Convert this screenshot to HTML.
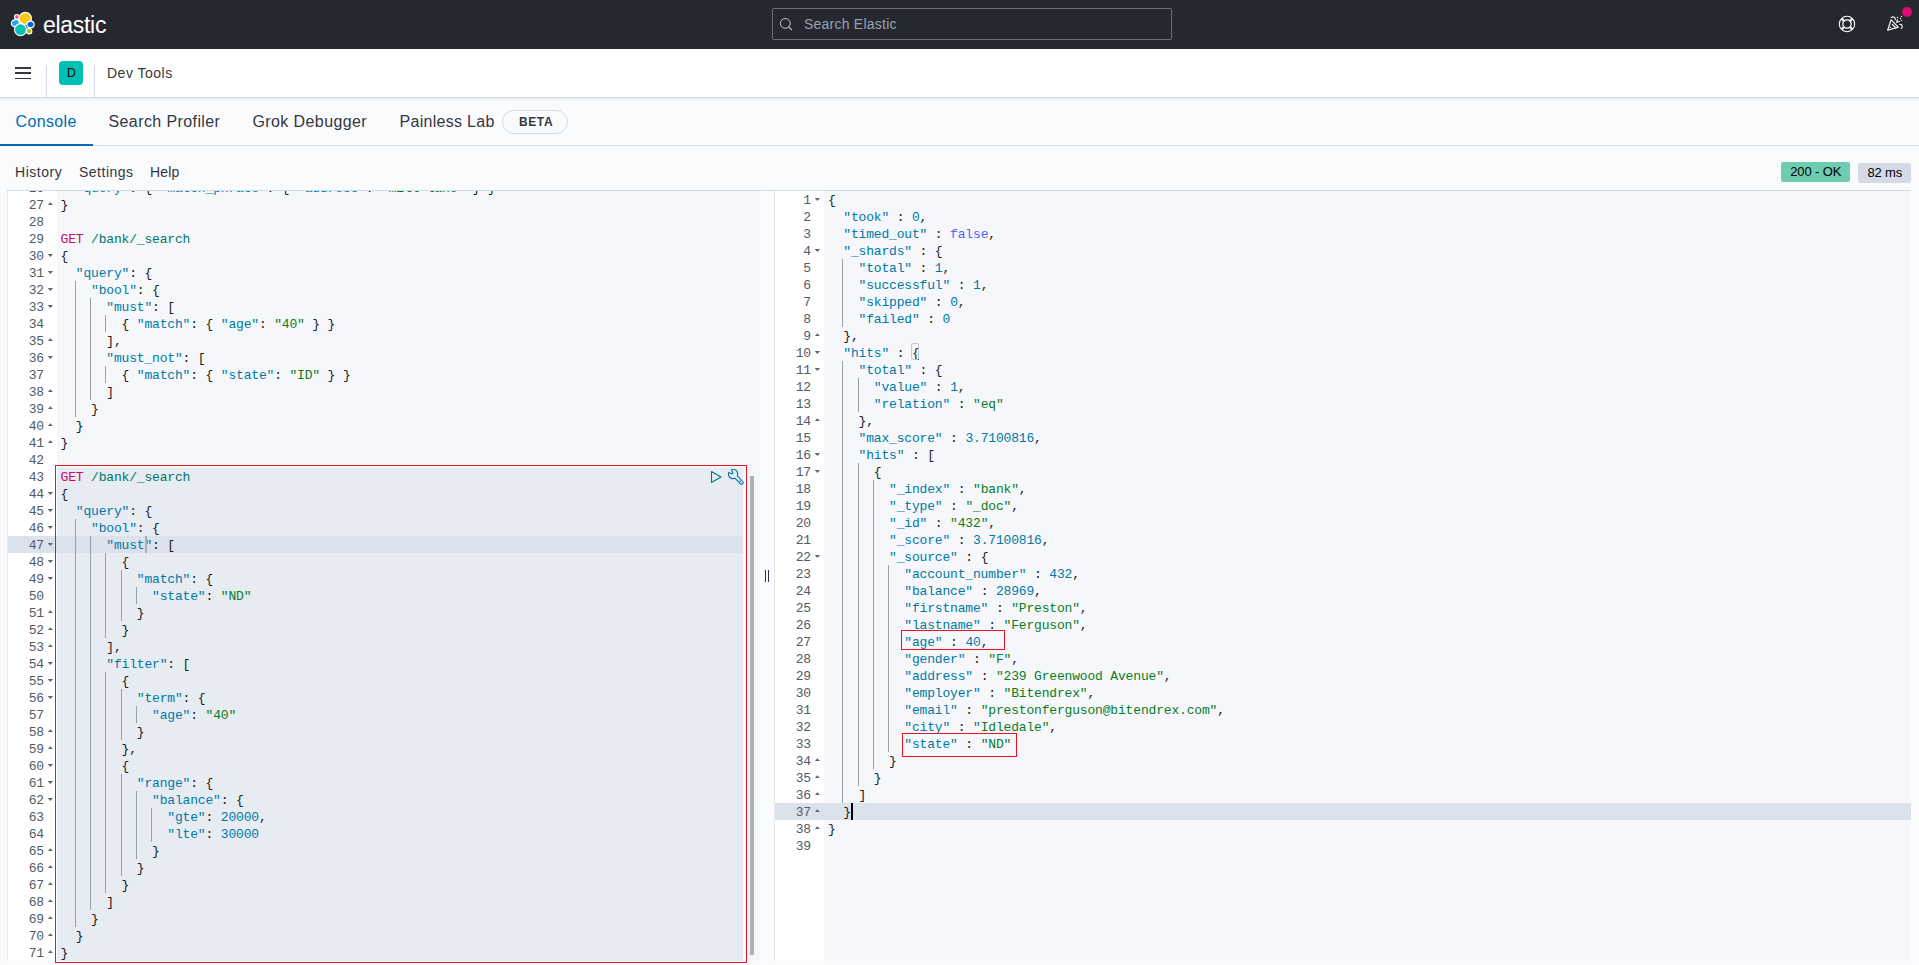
<!DOCTYPE html>
<html><head><meta charset="utf-8"><title>Dev Tools - Elastic</title>
<style>
*{box-sizing:border-box;margin:0;padding:0}
html,body{width:1919px;height:965px;overflow:hidden;background:#fafbfd;font-family:"Liberation Sans",sans-serif;color:#343741}
.a{position:absolute}
i{font-style:normal}
#hdr{position:absolute;left:0;top:0;width:1919px;height:49px;background:#25282f}
#bc{position:absolute;left:0;top:49px;width:1919px;height:49px;background:#fff;border-bottom:1px solid #d3dae6;box-shadow:0 1px 2px rgba(50,60,80,0.08),0 2px 3px rgba(50,60,80,0.03)}
.t{position:absolute;white-space:pre;line-height:1}
/* editors */
.ed{position:absolute;overflow:hidden}
.gn{position:absolute;height:17px;line-height:17px;text-align:right;font-family:"Liberation Mono",monospace;font-size:13px;letter-spacing:-0.171px;color:#535966;padding-top:1px}
.cl{position:absolute;height:17px;line-height:17px;white-space:pre;font-family:"Liberation Mono",monospace;font-size:13px;letter-spacing:-0.171px;color:#1a1c21;padding-top:1px}
.k{color:#0079a5}.s{color:#0b7c1f}.n{color:#0079a5}.c{color:#585cf6}
.ig{position:absolute;width:1px;height:17px;background:#98a1b0}
.fw{position:absolute;width:5.4px;height:3px;background:#5f6571}
.fo{clip-path:polygon(0 0,100% 0,50% 100%)}
.fc{clip-path:polygon(50% 0,100% 100%,0 100%)}
</style></head>
<body>
<div id="hdr">
  <svg class="a" style="left:10px;top:11px" width="26" height="26" viewBox="0 0 26 26">
    <g stroke="#fff" stroke-width="1.2">
      <circle cx="6.9" cy="5.9" r="2.4" fill="#f04e98"/>
      <ellipse cx="5.4" cy="12.1" rx="4.1" ry="3.4" transform="rotate(-20 5.4 12.1)" fill="#1ba9f5"/>
      <circle cx="15.3" cy="7.4" r="6.1" fill="#fec514"/>
      <ellipse cx="20.5" cy="13.4" rx="3.6" ry="3.3" fill="#0b64dd"/>
      <circle cx="10.5" cy="18.7" r="6" fill="#00bfb3"/>
      <circle cx="19.1" cy="20.2" r="2.7" fill="#93c90e"/>
    </g>
  </svg>
  <div class="t" style="left:43px;top:14px;font-size:23px;color:#fff;letter-spacing:-0.3px">elastic</div>
  <div class="a" style="left:772px;top:8px;width:400px;height:32px;border:1px solid #6a6f78;border-radius:2px"></div>
  <svg class="a" style="left:778px;top:17px" width="16" height="16" viewBox="0 0 16 16"><circle cx="7.3" cy="6.4" r="4.9" fill="none" stroke="#c8ccd2" stroke-width="1"/><path d="M10.7 9.9 L14 13.1" stroke="#c8ccd2" stroke-width="1.1"/></svg>
  <div class="t" style="left:804px;top:17px;font-size:14px;color:#98a2b3;letter-spacing:0.23px">Search Elastic</div>
  <svg class="a" style="left:1838px;top:15px" width="18" height="18" viewBox="0 0 18 18">
    <circle cx="9" cy="9" r="7.7" fill="none" stroke="#fff" stroke-width="1.1"/>
    <circle cx="9" cy="9" r="4.2" fill="none" stroke="#fff" stroke-width="1.2"/>
    <path d="M3.8 3.8 L5.7 5.7 M14.2 3.8 L12.3 5.7 M3.8 14.2 L5.7 12.3 M14.2 14.2 L12.3 12.3" stroke="#fff" stroke-width="2.3"/>
  </svg>
  <svg class="a" style="left:1882px;top:12px" width="26" height="24" viewBox="0 0 26 24" fill="none" stroke="#fff" stroke-width="1.1" stroke-linecap="round" stroke-linejoin="round">
    <path d="M5.6 18.2 L9.1 7.8 L16.3 15.1 Z"/>
    <path d="M10.4 12.5 L13.8 15.9"/>
    <path d="M9.2 5.7 C10.6 4.3 13.6 4.7 13.3 7.8"/>
    <path d="M15.4 7.6 L14.6 10.2 L17.5 9.5"/>
    <path d="M17.8 12.5 C19.6 11.7 21.4 13.7 19.4 16.5"/>
    <g fill="#fff" stroke="none"><circle cx="8.4" cy="15.5" r="0.65"/><circle cx="15.5" cy="5.4" r="0.65"/><circle cx="19.5" cy="4.4" r="0.65"/><circle cx="18.5" cy="6.5" r="0.65"/><circle cx="19.5" cy="8.4" r="0.65"/></g>
  </svg>
  <div class="a" style="left:1901.7px;top:6.7px;width:10.6px;height:10.6px;border-radius:50%;background:#dd0a73"></div>
</div>

<div id="bc">
  <div class="a" style="left:15px;top:18px;width:16px;height:1.5px;background:#343741"></div>
  <div class="a" style="left:15px;top:23px;width:16px;height:1.5px;background:#343741"></div>
  <div class="a" style="left:15px;top:28.5px;width:16px;height:1.5px;background:#343741"></div>
  <div class="a" style="left:46px;top:16px;width:1px;height:32px;background:#d3dae6"></div>
  <div class="a" style="left:59px;top:12px;width:24px;height:24px;border-radius:4px;background:#00bfb3"></div>
  <div class="t" style="left:65.3px;top:18px;font-size:12px;color:#000;width:12px;text-align:center">D</div>
  <div class="a" style="left:94px;top:16px;width:1px;height:32px;background:#d3dae6"></div>
  <div class="t" style="left:107px;top:16.6px;font-size:14px;color:#343741;letter-spacing:0.5px">Dev Tools</div>
</div>

<!-- tabs -->
<div class="a" style="left:0;top:145px;width:1919px;height:1px;background:#d3dae6"></div>
<div class="a" style="left:0;top:144px;width:93px;height:2px;background:#006bb4"></div>
<div class="t" style="left:15.5px;top:114px;font-size:16px;color:#006bb4;letter-spacing:0.35px">Console</div>
<div class="t" style="left:108.5px;top:114px;font-size:16px;color:#343741;letter-spacing:0.4px">Search Profiler</div>
<div class="t" style="left:252.5px;top:114px;font-size:16px;color:#343741;letter-spacing:0.4px">Grok Debugger</div>
<div class="t" style="left:399.5px;top:114px;font-size:16px;color:#343741;letter-spacing:0.3px">Painless Lab</div>
<div class="a" style="left:502px;top:110px;width:66px;height:24px;border:1px solid #d3dae6;border-radius:12px"></div>
<div class="t" style="left:519px;top:116px;font-size:12px;font-weight:bold;color:#343741;letter-spacing:0.6px">BETA</div>

<!-- console menu -->
<div class="t" style="left:15px;top:165px;font-size:14px;color:#343741;letter-spacing:0.54px">History</div>
<div class="t" style="left:79px;top:165px;font-size:14px;color:#343741;letter-spacing:0.5px">Settings</div>
<div class="t" style="left:150px;top:165px;font-size:14px;color:#343741;letter-spacing:0.2px">Help</div>
<div class="a" style="left:1781px;top:162px;width:69px;height:20px;border-radius:2px;background:#6dccb1"></div>
<div class="t" style="left:1790.2px;top:165px;font-size:13px;color:#000;letter-spacing:-0.12px">200 - OK</div>
<div class="a" style="left:1858px;top:163px;width:53px;height:20px;border-radius:2px;background:#d3dae6"></div>
<div class="t" style="left:1867.6px;top:166px;font-size:13px;color:#000;letter-spacing:-0.2px">82 ms</div>

<!-- editor frame -->
<div class="a" style="left:7px;top:190px;width:1904px;height:1px;background:#d3dae6"></div>
<div class="a" style="left:7px;top:191px;width:1px;height:770px;background:#e4e8ef"></div>

<!-- left editor -->
<div class="ed" style="left:8px;top:191px;width:752px;height:770px;background:#f5f7fa">
  <div class="a" style="left:0;top:0;width:49px;height:770px;background:#fff"></div>
  <!-- selection of current request -->
  <div class="a" style="left:49px;top:277px;width:686px;height:493px;background:#e7ebf2"></div>
  <!-- active line -->
  <div class="a" style="left:0;top:345px;width:735px;height:17px;background:#dce2eb"></div>
  <div style="position:absolute;left:-8px;top:-191px;width:1919px;height:965px"><div class="gn" style="top:179px;left:8px;width:36px">26</div><div class="cl" style="top:179px;left:60.5px">  <i class="k">&quot;query&quot;</i>: { <i class="k">&quot;match_phrase&quot;</i>: { <i class="k">&quot;address&quot;</i>: <i class="s">&quot;mill lane&quot;</i> } }</div><div class="gn" style="top:196px;left:8px;width:36px">27</div><div class="fw fc" style="top:202.3px;left:47.7px"></div><div class="cl" style="top:196px;left:60.5px">}</div><div class="gn" style="top:213px;left:8px;width:36px">28</div><div class="gn" style="top:230px;left:8px;width:36px">29</div><div class="cl" style="top:230px;left:60.5px"><i style="color:#c80a68">GET</i> <i style="color:#00756c">/bank/_search</i></div><div class="gn" style="top:247px;left:8px;width:36px">30</div><div class="fw fo" style="top:254px;left:47.7px"></div><div class="cl" style="top:247px;left:60.5px">{</div><div class="gn" style="top:264px;left:8px;width:36px">31</div><div class="fw fo" style="top:271px;left:47.7px"></div><div class="cl" style="top:264px;left:60.5px">  <i class="k">&quot;query&quot;</i>: {</div><div class="gn" style="top:281px;left:8px;width:36px">32</div><div class="fw fo" style="top:288px;left:47.7px"></div><div class="ig" style="top:281px;left:75px"></div><div class="cl" style="top:281px;left:60.5px">    <i class="k">&quot;bool&quot;</i>: {</div><div class="gn" style="top:298px;left:8px;width:36px">33</div><div class="fw fo" style="top:305px;left:47.7px"></div><div class="ig" style="top:298px;left:75px"></div><div class="ig" style="top:298px;left:90px"></div><div class="cl" style="top:298px;left:60.5px">      <i class="k">&quot;must&quot;</i>: [</div><div class="gn" style="top:315px;left:8px;width:36px">34</div><div class="ig" style="top:315px;left:75px"></div><div class="ig" style="top:315px;left:90px"></div><div class="ig" style="top:315px;left:105px"></div><div class="cl" style="top:315px;left:60.5px">        { <i class="k">&quot;match&quot;</i>: { <i class="k">&quot;age&quot;</i>: <i class="s">&quot;40&quot;</i> } }</div><div class="gn" style="top:332px;left:8px;width:36px">35</div><div class="fw fc" style="top:338.3px;left:47.7px"></div><div class="ig" style="top:332px;left:75px"></div><div class="ig" style="top:332px;left:90px"></div><div class="cl" style="top:332px;left:60.5px">      ],</div><div class="gn" style="top:349px;left:8px;width:36px">36</div><div class="fw fo" style="top:356px;left:47.7px"></div><div class="ig" style="top:349px;left:75px"></div><div class="ig" style="top:349px;left:90px"></div><div class="cl" style="top:349px;left:60.5px">      <i class="k">&quot;must_not&quot;</i>: [</div><div class="gn" style="top:366px;left:8px;width:36px">37</div><div class="ig" style="top:366px;left:75px"></div><div class="ig" style="top:366px;left:90px"></div><div class="ig" style="top:366px;left:105px"></div><div class="cl" style="top:366px;left:60.5px">        { <i class="k">&quot;match&quot;</i>: { <i class="k">&quot;state&quot;</i>: <i class="s">&quot;ID&quot;</i> } }</div><div class="gn" style="top:383px;left:8px;width:36px">38</div><div class="fw fc" style="top:389.3px;left:47.7px"></div><div class="ig" style="top:383px;left:75px"></div><div class="ig" style="top:383px;left:90px"></div><div class="cl" style="top:383px;left:60.5px">      ]</div><div class="gn" style="top:400px;left:8px;width:36px">39</div><div class="fw fc" style="top:406.3px;left:47.7px"></div><div class="ig" style="top:400px;left:75px"></div><div class="cl" style="top:400px;left:60.5px">    }</div><div class="gn" style="top:417px;left:8px;width:36px">40</div><div class="fw fc" style="top:423.3px;left:47.7px"></div><div class="cl" style="top:417px;left:60.5px">  }</div><div class="gn" style="top:434px;left:8px;width:36px">41</div><div class="fw fc" style="top:440.3px;left:47.7px"></div><div class="cl" style="top:434px;left:60.5px">}</div><div class="gn" style="top:451px;left:8px;width:36px">42</div><div class="gn" style="top:468px;left:8px;width:36px">43</div><div class="cl" style="top:468px;left:60.5px"><i style="color:#c80a68">GET</i> <i style="color:#00756c">/bank/_search</i></div><div class="gn" style="top:485px;left:8px;width:36px">44</div><div class="fw fo" style="top:492px;left:47.7px"></div><div class="cl" style="top:485px;left:60.5px">{</div><div class="gn" style="top:502px;left:8px;width:36px">45</div><div class="fw fo" style="top:509px;left:47.7px"></div><div class="cl" style="top:502px;left:60.5px">  <i class="k">&quot;query&quot;</i>: {</div><div class="gn" style="top:519px;left:8px;width:36px">46</div><div class="fw fo" style="top:526px;left:47.7px"></div><div class="ig" style="top:519px;left:75px"></div><div class="cl" style="top:519px;left:60.5px">    <i class="k">&quot;bool&quot;</i>: {</div><div class="gn" style="top:536px;left:8px;width:36px">47</div><div class="fw fo" style="top:543px;left:47.7px"></div><div class="ig" style="top:536px;left:75px"></div><div class="ig" style="top:536px;left:90px"></div><div class="cl" style="top:536px;left:60.5px">      <i class="k">&quot;must&quot;</i>: [</div><div class="gn" style="top:553px;left:8px;width:36px">48</div><div class="fw fo" style="top:560px;left:47.7px"></div><div class="ig" style="top:553px;left:75px"></div><div class="ig" style="top:553px;left:90px"></div><div class="ig" style="top:553px;left:105px"></div><div class="cl" style="top:553px;left:60.5px">        {</div><div class="gn" style="top:570px;left:8px;width:36px">49</div><div class="fw fo" style="top:577px;left:47.7px"></div><div class="ig" style="top:570px;left:75px"></div><div class="ig" style="top:570px;left:90px"></div><div class="ig" style="top:570px;left:105px"></div><div class="ig" style="top:570px;left:121px"></div><div class="cl" style="top:570px;left:60.5px">          <i class="k">&quot;match&quot;</i>: {</div><div class="gn" style="top:587px;left:8px;width:36px">50</div><div class="ig" style="top:587px;left:75px"></div><div class="ig" style="top:587px;left:90px"></div><div class="ig" style="top:587px;left:105px"></div><div class="ig" style="top:587px;left:121px"></div><div class="ig" style="top:587px;left:136px"></div><div class="cl" style="top:587px;left:60.5px">            <i class="k">&quot;state&quot;</i>: <i class="s">&quot;ND&quot;</i></div><div class="gn" style="top:604px;left:8px;width:36px">51</div><div class="fw fc" style="top:610.3px;left:47.7px"></div><div class="ig" style="top:604px;left:75px"></div><div class="ig" style="top:604px;left:90px"></div><div class="ig" style="top:604px;left:105px"></div><div class="ig" style="top:604px;left:121px"></div><div class="cl" style="top:604px;left:60.5px">          }</div><div class="gn" style="top:621px;left:8px;width:36px">52</div><div class="fw fc" style="top:627.3px;left:47.7px"></div><div class="ig" style="top:621px;left:75px"></div><div class="ig" style="top:621px;left:90px"></div><div class="ig" style="top:621px;left:105px"></div><div class="cl" style="top:621px;left:60.5px">        }</div><div class="gn" style="top:638px;left:8px;width:36px">53</div><div class="fw fc" style="top:644.3px;left:47.7px"></div><div class="ig" style="top:638px;left:75px"></div><div class="ig" style="top:638px;left:90px"></div><div class="cl" style="top:638px;left:60.5px">      ],</div><div class="gn" style="top:655px;left:8px;width:36px">54</div><div class="fw fo" style="top:662px;left:47.7px"></div><div class="ig" style="top:655px;left:75px"></div><div class="ig" style="top:655px;left:90px"></div><div class="cl" style="top:655px;left:60.5px">      <i class="k">&quot;filter&quot;</i>: [</div><div class="gn" style="top:672px;left:8px;width:36px">55</div><div class="fw fo" style="top:679px;left:47.7px"></div><div class="ig" style="top:672px;left:75px"></div><div class="ig" style="top:672px;left:90px"></div><div class="ig" style="top:672px;left:105px"></div><div class="cl" style="top:672px;left:60.5px">        {</div><div class="gn" style="top:689px;left:8px;width:36px">56</div><div class="fw fo" style="top:696px;left:47.7px"></div><div class="ig" style="top:689px;left:75px"></div><div class="ig" style="top:689px;left:90px"></div><div class="ig" style="top:689px;left:105px"></div><div class="ig" style="top:689px;left:121px"></div><div class="cl" style="top:689px;left:60.5px">          <i class="k">&quot;term&quot;</i>: {</div><div class="gn" style="top:706px;left:8px;width:36px">57</div><div class="ig" style="top:706px;left:75px"></div><div class="ig" style="top:706px;left:90px"></div><div class="ig" style="top:706px;left:105px"></div><div class="ig" style="top:706px;left:121px"></div><div class="ig" style="top:706px;left:136px"></div><div class="cl" style="top:706px;left:60.5px">            <i class="k">&quot;age&quot;</i>: <i class="s">&quot;40&quot;</i></div><div class="gn" style="top:723px;left:8px;width:36px">58</div><div class="fw fc" style="top:729.3px;left:47.7px"></div><div class="ig" style="top:723px;left:75px"></div><div class="ig" style="top:723px;left:90px"></div><div class="ig" style="top:723px;left:105px"></div><div class="ig" style="top:723px;left:121px"></div><div class="cl" style="top:723px;left:60.5px">          }</div><div class="gn" style="top:740px;left:8px;width:36px">59</div><div class="fw fc" style="top:746.3px;left:47.7px"></div><div class="ig" style="top:740px;left:75px"></div><div class="ig" style="top:740px;left:90px"></div><div class="ig" style="top:740px;left:105px"></div><div class="cl" style="top:740px;left:60.5px">        },</div><div class="gn" style="top:757px;left:8px;width:36px">60</div><div class="fw fo" style="top:764px;left:47.7px"></div><div class="ig" style="top:757px;left:75px"></div><div class="ig" style="top:757px;left:90px"></div><div class="ig" style="top:757px;left:105px"></div><div class="cl" style="top:757px;left:60.5px">        {</div><div class="gn" style="top:774px;left:8px;width:36px">61</div><div class="fw fo" style="top:781px;left:47.7px"></div><div class="ig" style="top:774px;left:75px"></div><div class="ig" style="top:774px;left:90px"></div><div class="ig" style="top:774px;left:105px"></div><div class="ig" style="top:774px;left:121px"></div><div class="cl" style="top:774px;left:60.5px">          <i class="k">&quot;range&quot;</i>: {</div><div class="gn" style="top:791px;left:8px;width:36px">62</div><div class="fw fo" style="top:798px;left:47.7px"></div><div class="ig" style="top:791px;left:75px"></div><div class="ig" style="top:791px;left:90px"></div><div class="ig" style="top:791px;left:105px"></div><div class="ig" style="top:791px;left:121px"></div><div class="ig" style="top:791px;left:136px"></div><div class="cl" style="top:791px;left:60.5px">            <i class="k">&quot;balance&quot;</i>: {</div><div class="gn" style="top:808px;left:8px;width:36px">63</div><div class="ig" style="top:808px;left:75px"></div><div class="ig" style="top:808px;left:90px"></div><div class="ig" style="top:808px;left:105px"></div><div class="ig" style="top:808px;left:121px"></div><div class="ig" style="top:808px;left:136px"></div><div class="ig" style="top:808px;left:151px"></div><div class="cl" style="top:808px;left:60.5px">              <i class="k">&quot;gte&quot;</i>: <i class="n">20000</i>,</div><div class="gn" style="top:825px;left:8px;width:36px">64</div><div class="ig" style="top:825px;left:75px"></div><div class="ig" style="top:825px;left:90px"></div><div class="ig" style="top:825px;left:105px"></div><div class="ig" style="top:825px;left:121px"></div><div class="ig" style="top:825px;left:136px"></div><div class="ig" style="top:825px;left:151px"></div><div class="cl" style="top:825px;left:60.5px">              <i class="k">&quot;lte&quot;</i>: <i class="n">30000</i></div><div class="gn" style="top:842px;left:8px;width:36px">65</div><div class="fw fc" style="top:848.3px;left:47.7px"></div><div class="ig" style="top:842px;left:75px"></div><div class="ig" style="top:842px;left:90px"></div><div class="ig" style="top:842px;left:105px"></div><div class="ig" style="top:842px;left:121px"></div><div class="ig" style="top:842px;left:136px"></div><div class="cl" style="top:842px;left:60.5px">            }</div><div class="gn" style="top:859px;left:8px;width:36px">66</div><div class="fw fc" style="top:865.3px;left:47.7px"></div><div class="ig" style="top:859px;left:75px"></div><div class="ig" style="top:859px;left:90px"></div><div class="ig" style="top:859px;left:105px"></div><div class="ig" style="top:859px;left:121px"></div><div class="cl" style="top:859px;left:60.5px">          }</div><div class="gn" style="top:876px;left:8px;width:36px">67</div><div class="fw fc" style="top:882.3px;left:47.7px"></div><div class="ig" style="top:876px;left:75px"></div><div class="ig" style="top:876px;left:90px"></div><div class="ig" style="top:876px;left:105px"></div><div class="cl" style="top:876px;left:60.5px">        }</div><div class="gn" style="top:893px;left:8px;width:36px">68</div><div class="fw fc" style="top:899.3px;left:47.7px"></div><div class="ig" style="top:893px;left:75px"></div><div class="ig" style="top:893px;left:90px"></div><div class="cl" style="top:893px;left:60.5px">      ]</div><div class="gn" style="top:910px;left:8px;width:36px">69</div><div class="fw fc" style="top:916.3px;left:47.7px"></div><div class="ig" style="top:910px;left:75px"></div><div class="cl" style="top:910px;left:60.5px">    }</div><div class="gn" style="top:927px;left:8px;width:36px">70</div><div class="fw fc" style="top:933.3px;left:47.7px"></div><div class="cl" style="top:927px;left:60.5px">  }</div><div class="gn" style="top:944px;left:8px;width:36px">71</div><div class="fw fc" style="top:950.3px;left:47.7px"></div><div class="cl" style="top:944px;left:60.5px">}</div></div>
  <!-- cursor -->
  <div class="a" style="left:137px;top:345px;width:2px;height:17px;background:#a8adb6"></div>
  <!-- scrollbar thumb -->
  <div class="a" style="left:742px;top:285px;width:4px;height:479px;background:#abb0b9"></div>
</div>
<!-- action icons -->
<svg class="a" style="left:709px;top:469px" width="16" height="16" viewBox="0 0 16 16"><path d="M2.5 2.5 L12 8 L2.5 13.5 Z" fill="none" stroke="#017d73" stroke-width="1.1" stroke-linejoin="round"/></svg>
<svg class="a" style="left:728px;top:469px" width="16" height="16" viewBox="0 0 16 16" fill="none" stroke="#006bb4" stroke-width="1.05" stroke-linejoin="round">
  <path d="M0.56 3.81 A4.6 4.6 0 0 0 6.92 9.18 L12.5 14.76 A1.6 1.6 0 0 0 14.76 12.5 L9.18 6.92 A4.6 4.6 0 0 0 3.6 0.6 L5.0 4.2 L4.2 5.0 L0.6 3.6 Z"/>
  <circle cx="12.2" cy="12.2" r="0.8" fill="#006bb4" stroke="none"/>
</svg>
<!-- red annotation around request -->
<div class="a" style="left:55px;top:465px;width:692px;height:498px;border:1.5px solid #e8141e"></div>

<!-- divider handle -->
<div class="a" style="left:765px;top:570px;width:1px;height:12px;background:#343741"></div>
<div class="a" style="left:768px;top:570px;width:1px;height:12px;background:#343741"></div>

<!-- right editor -->
<div class="ed" style="left:774px;top:191px;width:1137px;height:770px;background:#f5f7fa">
  <div class="a" style="left:0;top:0;width:1px;height:770px;background:#e4e8ef"></div>
  <div class="a" style="left:1px;top:0;width:49px;height:770px;background:#fff"></div>
  <div class="a" style="left:1px;top:612px;width:1136px;height:17px;background:#dce2eb"></div>
  <div style="position:absolute;left:-774px;top:-191px;width:1919px;height:965px"><div class="gn" style="top:191px;left:775px;width:36px">1</div><div class="fw fo" style="top:198px;left:814.7px"></div><div class="cl" style="top:191px;left:828px">{</div><div class="gn" style="top:208px;left:775px;width:36px">2</div><div class="cl" style="top:208px;left:828px">  <i class="k">&quot;took&quot;</i> : <i class="n">0</i>,</div><div class="gn" style="top:225px;left:775px;width:36px">3</div><div class="cl" style="top:225px;left:828px">  <i class="k">&quot;timed_out&quot;</i> : <i class="c">false</i>,</div><div class="gn" style="top:242px;left:775px;width:36px">4</div><div class="fw fo" style="top:249px;left:814.7px"></div><div class="cl" style="top:242px;left:828px">  <i class="k">&quot;_shards&quot;</i> : {</div><div class="gn" style="top:259px;left:775px;width:36px">5</div><div class="ig" style="top:259px;left:842px"></div><div class="cl" style="top:259px;left:828px">    <i class="k">&quot;total&quot;</i> : <i class="n">1</i>,</div><div class="gn" style="top:276px;left:775px;width:36px">6</div><div class="ig" style="top:276px;left:842px"></div><div class="cl" style="top:276px;left:828px">    <i class="k">&quot;successful&quot;</i> : <i class="n">1</i>,</div><div class="gn" style="top:293px;left:775px;width:36px">7</div><div class="ig" style="top:293px;left:842px"></div><div class="cl" style="top:293px;left:828px">    <i class="k">&quot;skipped&quot;</i> : <i class="n">0</i>,</div><div class="gn" style="top:310px;left:775px;width:36px">8</div><div class="ig" style="top:310px;left:842px"></div><div class="cl" style="top:310px;left:828px">    <i class="k">&quot;failed&quot;</i> : <i class="n">0</i></div><div class="gn" style="top:327px;left:775px;width:36px">9</div><div class="fw fc" style="top:333.3px;left:814.7px"></div><div class="cl" style="top:327px;left:828px">  },</div><div class="gn" style="top:344px;left:775px;width:36px">10</div><div class="fw fo" style="top:351px;left:814.7px"></div><div class="cl" style="top:344px;left:828px">  <i class="k">&quot;hits&quot;</i> : {</div><div class="gn" style="top:361px;left:775px;width:36px">11</div><div class="fw fo" style="top:368px;left:814.7px"></div><div class="ig" style="top:361px;left:842px"></div><div class="cl" style="top:361px;left:828px">    <i class="k">&quot;total&quot;</i> : {</div><div class="gn" style="top:378px;left:775px;width:36px">12</div><div class="ig" style="top:378px;left:842px"></div><div class="ig" style="top:378px;left:858px"></div><div class="cl" style="top:378px;left:828px">      <i class="k">&quot;value&quot;</i> : <i class="n">1</i>,</div><div class="gn" style="top:395px;left:775px;width:36px">13</div><div class="ig" style="top:395px;left:842px"></div><div class="ig" style="top:395px;left:858px"></div><div class="cl" style="top:395px;left:828px">      <i class="k">&quot;relation&quot;</i> : <i class="s">&quot;eq&quot;</i></div><div class="gn" style="top:412px;left:775px;width:36px">14</div><div class="fw fc" style="top:418.3px;left:814.7px"></div><div class="ig" style="top:412px;left:842px"></div><div class="cl" style="top:412px;left:828px">    },</div><div class="gn" style="top:429px;left:775px;width:36px">15</div><div class="ig" style="top:429px;left:842px"></div><div class="cl" style="top:429px;left:828px">    <i class="k">&quot;max_score&quot;</i> : <i class="n">3.7100816</i>,</div><div class="gn" style="top:446px;left:775px;width:36px">16</div><div class="fw fo" style="top:453px;left:814.7px"></div><div class="ig" style="top:446px;left:842px"></div><div class="cl" style="top:446px;left:828px">    <i class="k">&quot;hits&quot;</i> : [</div><div class="gn" style="top:463px;left:775px;width:36px">17</div><div class="fw fo" style="top:470px;left:814.7px"></div><div class="ig" style="top:463px;left:842px"></div><div class="ig" style="top:463px;left:858px"></div><div class="cl" style="top:463px;left:828px">      {</div><div class="gn" style="top:480px;left:775px;width:36px">18</div><div class="ig" style="top:480px;left:842px"></div><div class="ig" style="top:480px;left:858px"></div><div class="ig" style="top:480px;left:873px"></div><div class="cl" style="top:480px;left:828px">        <i class="k">&quot;_index&quot;</i> : <i class="s">&quot;bank&quot;</i>,</div><div class="gn" style="top:497px;left:775px;width:36px">19</div><div class="ig" style="top:497px;left:842px"></div><div class="ig" style="top:497px;left:858px"></div><div class="ig" style="top:497px;left:873px"></div><div class="cl" style="top:497px;left:828px">        <i class="k">&quot;_type&quot;</i> : <i class="s">&quot;_doc&quot;</i>,</div><div class="gn" style="top:514px;left:775px;width:36px">20</div><div class="ig" style="top:514px;left:842px"></div><div class="ig" style="top:514px;left:858px"></div><div class="ig" style="top:514px;left:873px"></div><div class="cl" style="top:514px;left:828px">        <i class="k">&quot;_id&quot;</i> : <i class="s">&quot;432&quot;</i>,</div><div class="gn" style="top:531px;left:775px;width:36px">21</div><div class="ig" style="top:531px;left:842px"></div><div class="ig" style="top:531px;left:858px"></div><div class="ig" style="top:531px;left:873px"></div><div class="cl" style="top:531px;left:828px">        <i class="k">&quot;_score&quot;</i> : <i class="n">3.7100816</i>,</div><div class="gn" style="top:548px;left:775px;width:36px">22</div><div class="fw fo" style="top:555px;left:814.7px"></div><div class="ig" style="top:548px;left:842px"></div><div class="ig" style="top:548px;left:858px"></div><div class="ig" style="top:548px;left:873px"></div><div class="cl" style="top:548px;left:828px">        <i class="k">&quot;_source&quot;</i> : {</div><div class="gn" style="top:565px;left:775px;width:36px">23</div><div class="ig" style="top:565px;left:842px"></div><div class="ig" style="top:565px;left:858px"></div><div class="ig" style="top:565px;left:873px"></div><div class="ig" style="top:565px;left:888px"></div><div class="cl" style="top:565px;left:828px">          <i class="k">&quot;account_number&quot;</i> : <i class="n">432</i>,</div><div class="gn" style="top:582px;left:775px;width:36px">24</div><div class="ig" style="top:582px;left:842px"></div><div class="ig" style="top:582px;left:858px"></div><div class="ig" style="top:582px;left:873px"></div><div class="ig" style="top:582px;left:888px"></div><div class="cl" style="top:582px;left:828px">          <i class="k">&quot;balance&quot;</i> : <i class="n">28969</i>,</div><div class="gn" style="top:599px;left:775px;width:36px">25</div><div class="ig" style="top:599px;left:842px"></div><div class="ig" style="top:599px;left:858px"></div><div class="ig" style="top:599px;left:873px"></div><div class="ig" style="top:599px;left:888px"></div><div class="cl" style="top:599px;left:828px">          <i class="k">&quot;firstname&quot;</i> : <i class="s">&quot;Preston&quot;</i>,</div><div class="gn" style="top:616px;left:775px;width:36px">26</div><div class="ig" style="top:616px;left:842px"></div><div class="ig" style="top:616px;left:858px"></div><div class="ig" style="top:616px;left:873px"></div><div class="ig" style="top:616px;left:888px"></div><div class="cl" style="top:616px;left:828px">          <i class="k">&quot;lastname&quot;</i> : <i class="s">&quot;Ferguson&quot;</i>,</div><div class="gn" style="top:633px;left:775px;width:36px">27</div><div class="ig" style="top:633px;left:842px"></div><div class="ig" style="top:633px;left:858px"></div><div class="ig" style="top:633px;left:873px"></div><div class="ig" style="top:633px;left:888px"></div><div class="cl" style="top:633px;left:828px">          <i class="k">&quot;age&quot;</i> : <i class="n">40</i>,</div><div class="gn" style="top:650px;left:775px;width:36px">28</div><div class="ig" style="top:650px;left:842px"></div><div class="ig" style="top:650px;left:858px"></div><div class="ig" style="top:650px;left:873px"></div><div class="ig" style="top:650px;left:888px"></div><div class="cl" style="top:650px;left:828px">          <i class="k">&quot;gender&quot;</i> : <i class="s">&quot;F&quot;</i>,</div><div class="gn" style="top:667px;left:775px;width:36px">29</div><div class="ig" style="top:667px;left:842px"></div><div class="ig" style="top:667px;left:858px"></div><div class="ig" style="top:667px;left:873px"></div><div class="ig" style="top:667px;left:888px"></div><div class="cl" style="top:667px;left:828px">          <i class="k">&quot;address&quot;</i> : <i class="s">&quot;239 Greenwood Avenue&quot;</i>,</div><div class="gn" style="top:684px;left:775px;width:36px">30</div><div class="ig" style="top:684px;left:842px"></div><div class="ig" style="top:684px;left:858px"></div><div class="ig" style="top:684px;left:873px"></div><div class="ig" style="top:684px;left:888px"></div><div class="cl" style="top:684px;left:828px">          <i class="k">&quot;employer&quot;</i> : <i class="s">&quot;Bitendrex&quot;</i>,</div><div class="gn" style="top:701px;left:775px;width:36px">31</div><div class="ig" style="top:701px;left:842px"></div><div class="ig" style="top:701px;left:858px"></div><div class="ig" style="top:701px;left:873px"></div><div class="ig" style="top:701px;left:888px"></div><div class="cl" style="top:701px;left:828px">          <i class="k">&quot;email&quot;</i> : <i class="s">&quot;prestonferguson@bitendrex.com&quot;</i>,</div><div class="gn" style="top:718px;left:775px;width:36px">32</div><div class="ig" style="top:718px;left:842px"></div><div class="ig" style="top:718px;left:858px"></div><div class="ig" style="top:718px;left:873px"></div><div class="ig" style="top:718px;left:888px"></div><div class="cl" style="top:718px;left:828px">          <i class="k">&quot;city&quot;</i> : <i class="s">&quot;Idledale&quot;</i>,</div><div class="gn" style="top:735px;left:775px;width:36px">33</div><div class="ig" style="top:735px;left:842px"></div><div class="ig" style="top:735px;left:858px"></div><div class="ig" style="top:735px;left:873px"></div><div class="ig" style="top:735px;left:888px"></div><div class="cl" style="top:735px;left:828px">          <i class="k">&quot;state&quot;</i> : <i class="s">&quot;ND&quot;</i></div><div class="gn" style="top:752px;left:775px;width:36px">34</div><div class="fw fc" style="top:758.3px;left:814.7px"></div><div class="ig" style="top:752px;left:842px"></div><div class="ig" style="top:752px;left:858px"></div><div class="ig" style="top:752px;left:873px"></div><div class="cl" style="top:752px;left:828px">        }</div><div class="gn" style="top:769px;left:775px;width:36px">35</div><div class="fw fc" style="top:775.3px;left:814.7px"></div><div class="ig" style="top:769px;left:842px"></div><div class="ig" style="top:769px;left:858px"></div><div class="cl" style="top:769px;left:828px">      }</div><div class="gn" style="top:786px;left:775px;width:36px">36</div><div class="fw fc" style="top:792.3px;left:814.7px"></div><div class="ig" style="top:786px;left:842px"></div><div class="cl" style="top:786px;left:828px">    ]</div><div class="gn" style="top:803px;left:775px;width:36px">37</div><div class="fw fc" style="top:809.3px;left:814.7px"></div><div class="cl" style="top:803px;left:828px">  }</div><div class="gn" style="top:820px;left:775px;width:36px">38</div><div class="fw fc" style="top:826.3px;left:814.7px"></div><div class="cl" style="top:820px;left:828px">}</div><div class="gn" style="top:837px;left:775px;width:36px">39</div></div>
  <div class="a" style="left:137.3px;top:152px;width:7.3px;height:17px;border:1px solid #c5cbd6;border-radius:2px"></div>
  <div class="a" style="left:77px;top:612px;width:2px;height:17px;background:#000"></div>
</div>
<!-- red annotations right -->
<div class="a" style="left:901px;top:630px;width:104px;height:20px;border:1.5px solid #e8141e"></div>
<div class="a" style="left:902px;top:733px;width:115px;height:24px;border:1.5px solid #e8141e"></div>
</body></html>
